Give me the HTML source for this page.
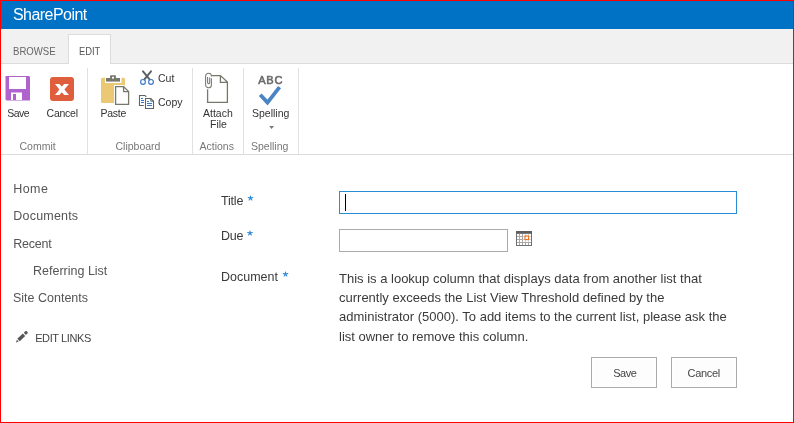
<!DOCTYPE html>
<html><head><meta charset="utf-8">
<style>
html,body{margin:0;padding:0;}
body{width:794px;height:423px;position:relative;overflow:hidden;background:#fff;font-family:"Liberation Sans",sans-serif;-webkit-font-smoothing:antialiased;}
#wrap{position:absolute;left:0;top:0;width:794px;height:423px;will-change:transform;}
.a{position:absolute;white-space:nowrap;line-height:1;}
#frame{position:absolute;left:0;top:0;width:792px;height:421px;border:1px solid #ff0000;z-index:10;pointer-events:none;}
#suite{position:absolute;left:0;top:0;width:794px;height:29px;background:#0072c6;}
#tabrow{position:absolute;left:0;top:29px;width:794px;height:34px;background:#f1f1f1;border-bottom:1px solid #dcdcdc;}
#edittab{position:absolute;left:68px;top:34px;width:41px;height:30px;background:#fff;border:1px solid #dcdcdc;border-bottom:none;}
#ribbon{position:absolute;left:0;top:64px;width:794px;height:90px;background:#fff;border-bottom:1px solid #dcdcdc;}
.sep{position:absolute;top:68px;width:1px;height:86px;background:#e1e1e1;}
.rl{font-size:10.5px;color:#333;}
.gl{font-size:10.5px;color:#777;}
.nav{font-size:12.5px;color:#555;}
.lab{font-size:12.5px;color:#3a3a3a;}

</style></head><body><div id="wrap">
<div id="suite"></div>
<div class="a" style="left:13px;top:6.9px;font-size:16px;color:#fff;letter-spacing:-0.55px;">SharePoint</div>
<div id="tabrow"></div>
<div id="edittab"></div>
<div class="a" style="left:13.3px;top:45.5px;font-size:11px;color:#666;transform:scaleX(0.872);transform-origin:0 0;">BROWSE</div>
<div class="a" style="left:78.5px;top:45.7px;font-size:11px;color:#555;transform:scaleX(0.85);transform-origin:0 0;">EDIT</div>
<div id="ribbon"></div>
<div class="sep" style="left:87px"></div>
<div class="sep" style="left:192px"></div>
<div class="sep" style="left:243px"></div>
<div class="sep" style="left:298px"></div>

<!-- ribbon labels -->
<div class="a rl" style="left:7.3px;top:107.6px;letter-spacing:-0.55px;">Save</div>
<div class="a rl" style="left:46.6px;top:107.6px;letter-spacing:-0.25px;">Cancel</div>
<div class="a rl" style="left:100.6px;top:107.6px;letter-spacing:-0.3px;">Paste</div>
<div class="a rl" style="left:158px;top:73.1px;">Cut</div>
<div class="a rl" style="left:158px;top:96.5px;">Copy</div>
<div class="a rl" style="left:203px;top:107.8px;">Attach</div>
<div class="a rl" style="left:210px;top:119.3px;">File</div>
<div class="a rl" style="left:252px;top:108.4px;">Spelling</div>
<div class="a gl" style="left:19.5px;top:141px;">Commit</div>
<div class="a gl" style="left:115.5px;top:141.3px;">Clipboard</div>
<div class="a gl" style="left:199.5px;top:141.3px;">Actions</div>
<div class="a gl" style="left:251px;top:141.3px;">Spelling</div>

<!-- nav -->
<div class="a nav" style="left:13.3px;top:183.4px;letter-spacing:0.4px;">Home</div>
<div class="a nav" style="left:13.3px;top:210.4px;letter-spacing:0.2px;">Documents</div>
<div class="a nav" style="left:13.3px;top:238.1px;letter-spacing:-0.25px;">Recent</div>
<div class="a nav" style="left:33px;top:264.6px;">Referring List</div>
<div class="a nav" style="left:13px;top:291.6px;">Site Contents</div>
<div class="a" style="left:35.2px;top:332.9px;font-size:11px;color:#444;letter-spacing:-0.4px;">EDIT LINKS</div>

<!-- form -->
<div class="a lab" style="left:221px;top:194.6px;letter-spacing:-0.2px;">Title</div>
<div class="a lab" style="left:221px;top:229.8px;letter-spacing:-0.3px;">Due</div>
<div class="a lab" style="left:221px;top:270.8px;">Document</div>
<div style="position:absolute;left:339px;top:191px;width:396px;height:21px;border:1px solid #2a8dd4;"></div>
<div style="position:absolute;left:345px;top:194px;width:1px;height:17px;background:#000;"></div>
<div style="position:absolute;left:339px;top:229px;width:167px;height:21px;border:1px solid #ababab;"></div>
<div class="a" style="left:339px;top:269px;font-size:13px;line-height:19.2px;color:#3a3a3a;">This is a lookup column that displays data from another list that<br>currently exceeds the List View Threshold defined by the<br>administrator (5000). To add items to the current list, please ask the<br>list owner to remove this column.</div>
<div style="position:absolute;left:591px;top:357px;width:64px;height:29px;border:1px solid #ababab;background:#fdfdfd;box-shadow:inset 0 0 0 1px #fff;"></div>
<div style="position:absolute;left:671px;top:357px;width:64px;height:29px;border:1px solid #ababab;background:#fdfdfd;box-shadow:inset 0 0 0 1px #fff;"></div>
<div class="a" style="left:613.2px;top:367.8px;font-size:11px;color:#444;letter-spacing:-0.5px;">Save</div>
<div class="a" style="left:687.5px;top:367.8px;font-size:11px;color:#444;letter-spacing:-0.3px;">Cancel</div>


<!-- icons -->
<svg width="794" height="423" style="position:absolute;left:0;top:0;">
 <!-- save floppy -->
 <path d="M5.5 76 H29 L30 77 V100.5 H6.5 L5.5 99.5 Z" fill="#b063cd"/>
 <rect x="9" y="77" width="17" height="12" fill="#fff"/>
 <rect x="11" y="92.5" width="11" height="7.5" fill="#fff"/>
 <rect x="13" y="94" width="3" height="6" fill="#b063cd"/>
 <!-- cancel -->
 <rect x="50" y="77" width="24" height="24" rx="3" fill="#df5f3d"/>
 <path d="M55 84 H59.4 L61.8 86.6 L64.2 84 H68.9 L64.4 89.4 L68.9 94.9 H64.2 L61.8 92.2 L59.4 94.9 H55 L59.4 89.4 Z" fill="#fff"/>
 <!-- paste -->
 <rect x="101" y="77.8" width="24" height="25.2" rx="1.5" fill="#ebc874"/>
 <rect x="105" y="77" width="16.5" height="6" fill="#fff"/>
 <rect x="106" y="78" width="14" height="3.6" fill="#77776b"/>
 <rect x="110" y="75.2" width="6" height="3" rx="1" fill="#77776b"/>
 <rect x="112" y="76.8" width="2" height="1.8" fill="#fff"/>
 <path d="M114 85 H124 L130 91 V106 H114 Z" fill="#fff"/>
 <path d="M115.6 86.6 H123.6 L128.6 91.6 V104.4 H115.6 Z M123.6 86.6 V91.6 H128.6" fill="none" stroke="#77776b" stroke-width="1.3"/>
 <!-- cut -->
 <path d="M143 71.3 L149.6 79.4 M151 71.3 L144.4 79.4" stroke="#585e5e" stroke-width="1.9" stroke-linecap="round" fill="none"/>
 <circle cx="143" cy="81.9" r="2.4" fill="none" stroke="#3a78c3" stroke-width="1.15"/>
 <circle cx="151" cy="81.9" r="2.4" fill="none" stroke="#3a78c3" stroke-width="1.15"/>
 <!-- copy -->
 <path d="M143.8 105.5 H139.5 V95.5 H145 L146.3 96.8" fill="none" stroke="#5f6363" stroke-width="1.1"/>
 <path d="M141 98.5 H143 M141 100.5 H144 M141 102.5 H144" stroke="#3a78c3" stroke-width="1"/>
 <path d="M145.5 98.5 H150.8 L153.5 101.2 V108.5 H145.5 Z" fill="#fff" stroke="#5f6363" stroke-width="1.1"/>
 <path d="M150.8 98.5 V101.2 H153.5" fill="none" stroke="#5f6363" stroke-width="1"/>
 <path d="M147 101.5 H149 M147 103.5 H152 M147 105.5 H152" stroke="#3a78c3" stroke-width="1"/>
 <!-- attach -->
 <path d="M211.5 75.6 H220.4 L227.4 82 V102.3 H207.6 V89.2 M220.4 75.6 V82.3 H227.4" fill="none" stroke="#77776b" stroke-width="1.3"/>
 <path d="M211.4 78.2 V84.9 A2.9 2.9 0 0 1 205.6 84.9 V76.2 A2.9 2.9 0 0 1 211.4 76.2 V76.6 M207.6 77 V82.6 A1.05 1.05 0 0 0 209.7 82.6 V77.6" fill="none" stroke="#7a756e" stroke-width="1.05"/>
 <!-- spelling -->
 <text transform="translate(258.2 83.6) scale(0.94 1)" x="0" y="0" font-family="Liberation Sans" font-size="11.8" letter-spacing="0.75" fill="#6a6a6a" stroke="#6a6a6a" stroke-width="0.6">ABC</text>
 <path d="M260.25 94.75 L267.5 102.6 L279.55 87.2" fill="none" stroke="#4a84c3" stroke-width="3.8" stroke-linejoin="miter"/>
 <path d="M269.2 126 H274 L271.6 129 Z" fill="#777"/>
 <!-- pencil -->
 <g transform="translate(21.6 337) rotate(-44)">
  <path d="M-7.8 0 L-5.3 -1.3 V1.3 Z" fill="#555"/>
  <rect x="-4.3" y="-1.75" width="7.7" height="3.5" fill="#555"/>
  <rect x="4.4" y="-1.6" width="3.3" height="3.2" rx="1.1" fill="#555"/>
 </g>
 <!-- asterisks -->
 <path d="M250.5 198.1 V195.95 M250.5 198.1 L252.8 197.55 M250.5 198.1 L248.2 197.55 M250.5 198.1 L251.85 200.0 M250.5 198.1 L249.15 200.0" stroke="#2b88d8" stroke-width="1.15" stroke-linecap="round" fill="none"/>
 <path d="M250.0 233.1 V230.95 M250.0 233.1 L252.3 232.55 M250.0 233.1 L247.7 232.55 M250.0 233.1 L251.35 235.0 M250.0 233.1 L248.65 235.0" stroke="#2b88d8" stroke-width="1.15" stroke-linecap="round" fill="none"/>
 <path d="M285.5 274.1 V271.95 M285.5 274.1 L287.8 273.55 M285.5 274.1 L283.2 273.55 M285.5 274.1 L286.85 276.0 M285.5 274.1 L284.15 276.0" stroke="#2b88d8" stroke-width="1.15" stroke-linecap="round" fill="none"/>
 <!-- calendar -->
 <rect x="516" y="231" width="16" height="15" fill="#a8a8a8"/>
 <rect x="516.5" y="231.5" width="15" height="14" fill="none" stroke="#707070" stroke-width="1"/>
 <rect x="516" y="231" width="16" height="2.6" fill="#5e5e5e"/>
 <g fill="#fff"><rect x="517" y="234" width="2" height="2"/><rect x="520" y="234" width="2" height="2"/><rect x="523" y="234" width="2" height="2"/><rect x="526" y="234" width="2" height="2"/><rect x="529" y="234" width="2" height="2"/><rect x="517" y="237" width="2" height="2"/><rect x="520" y="237" width="2" height="2"/><rect x="523" y="237" width="2" height="2"/><rect x="526" y="237" width="2" height="2"/><rect x="529" y="237" width="2" height="2"/><rect x="517" y="240" width="2" height="2"/><rect x="520" y="240" width="2" height="2"/><rect x="523" y="240" width="2" height="2"/><rect x="526" y="240" width="2" height="2"/><rect x="529" y="240" width="2" height="2"/><rect x="517" y="243" width="2" height="2"/><rect x="520" y="243" width="2" height="2"/><rect x="523" y="243" width="2" height="2"/><rect x="526" y="243" width="2" height="2"/><rect x="529" y="243" width="2" height="2"/></g>
 <rect x="523" y="234" width="8" height="8" fill="#fff" opacity="0.55"/>
 <rect x="525" y="236" width="3.6" height="3.6" fill="#fff" stroke="#e8731e" stroke-width="1.15"/>
</svg>
<div id="frame"></div>
</div></body></html>
